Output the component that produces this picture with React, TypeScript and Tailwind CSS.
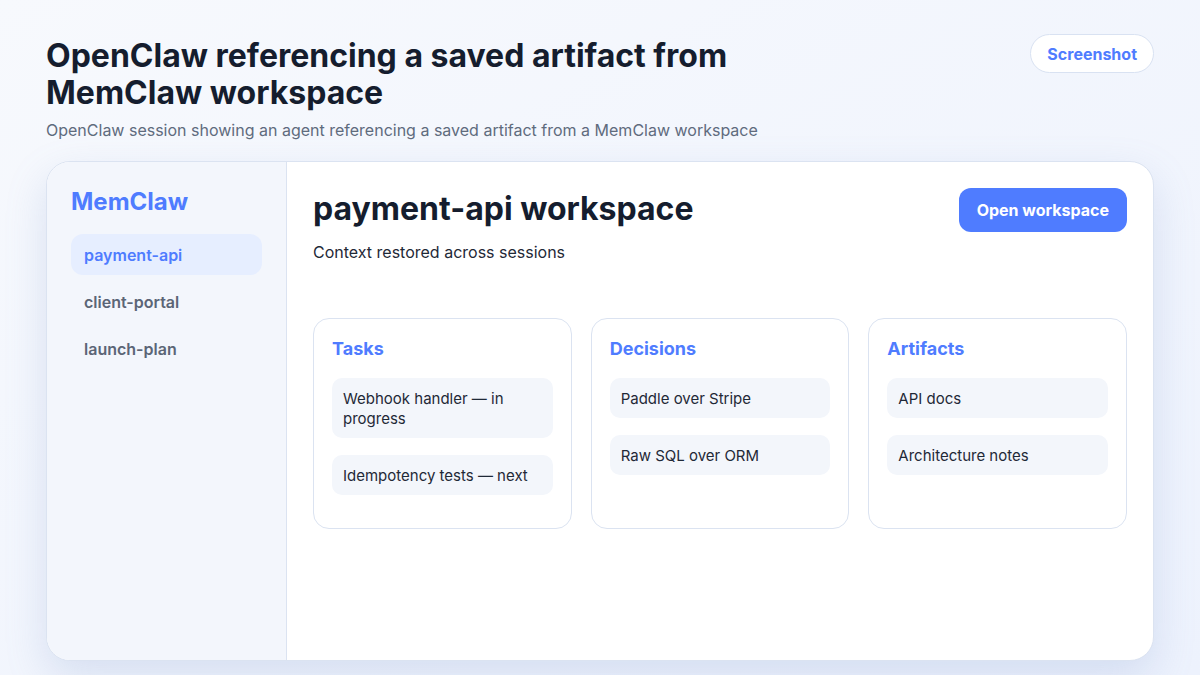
export default function App() {
  const cols = [
    { t: "Tasks", items: ["Webhook handler — in progress", "Idempotency tests — next"] },
    { t: "Decisions", items: ["Paddle over Stripe", "Raw SQL over ORM"] },
    { t: "Artifacts", items: ["API docs", "Architecture notes"] },
  ];
  return (
    <div
      className="w-[1200px] h-[675px] overflow-hidden bg-gradient-to-br from-[#f7f9fd] to-[#edf2fd] text-[#172033]"
      style={{ fontFamily: "Inter, 'Noto Sans', sans-serif" }}
    >
      <div className="px-[46px] pt-[37px]">
        <div className="flex items-start justify-between">
          <h1 className="w-[720px] text-[32px] leading-[37px] font-bold text-[#151d2e]">
            OpenClaw referencing a saved artifact from MemClaw workspace
          </h1>
          <button className="mt-[-3px] h-[39px] px-[16px] rounded-full border border-[#d9e2f2] bg-white text-[#4f7cff] text-[16px] font-bold">
            Screenshot
          </button>
        </div>
        <p className="mt-[9px] text-[16px] leading-[20px] text-[#5f6b7d]">
          OpenClaw session showing an agent referencing a saved artifact from a MemClaw workspace
        </p>
        <div className="mt-[21px] h-[500px] flex rounded-[24px] border border-[#dbe3f1] bg-white overflow-hidden shadow-[0_16px_40px_rgba(120,145,200,0.22)]">
          <aside className="w-[240px] shrink-0 bg-[#f3f6fc] border-r border-[#dbe3f1] px-[24px] pt-[25px]">
            <div className="text-[24px] leading-[30px] font-bold text-[#4f7cff]">MemClaw</div>
            <nav className="mt-[17px] flex flex-col gap-[6px]">
              {["payment-api", "client-portal", "launch-plan"].map((n, i) => (
                <div
                  key={n}
                  className={
                    "h-[41px] flex items-center px-[13px] rounded-[12px] text-[16px] font-semibold " +
                    (i === 0 ? "bg-[#e6eeff] text-[#4f7cff]" : "text-[#5b6576]")
                  }
                >
                  {n}
                </div>
              ))}
            </nav>
          </aside>
          <main className="flex-1 px-[26px] pt-[26px]">
            <div className="flex items-start justify-between">
              <div>
                <h2 className="text-[32px] leading-[42px] font-bold text-[#151d2e]">payment-api workspace</h2>
                <p className="mt-[12px] text-[16px] leading-[20px] text-[#1f2937]">Context restored across sessions</p>
              </div>
              <button className="h-[44px] px-[18px] rounded-[12px] bg-[#4f7cff] text-white text-[16px] font-bold">
                Open workspace
              </button>
            </div>
            <div className="mt-[56px] grid grid-cols-3 gap-[19px]">
              {cols.map((c) => (
                <div key={c.t} className="h-[211px] rounded-[16px] border border-[#dbe3f1] px-[18px] pt-[19px]">
                  <div className="text-[18px] leading-[22px] font-bold text-[#4f7cff]">{c.t}</div>
                  <div className="mt-[18px] flex flex-col gap-[17px]">
                    {c.items.map((it) => (
                      <div key={it} className="rounded-[10px] bg-[#f3f6fb] px-[11px] pt-[11px] pb-[9px] text-[15px] leading-[20px] text-[#1f2937]">
                        {it}
                      </div>
                    ))}
                  </div>
                </div>
              ))}
            </div>
          </main>
        </div>
      </div>
    </div>
  );
}
